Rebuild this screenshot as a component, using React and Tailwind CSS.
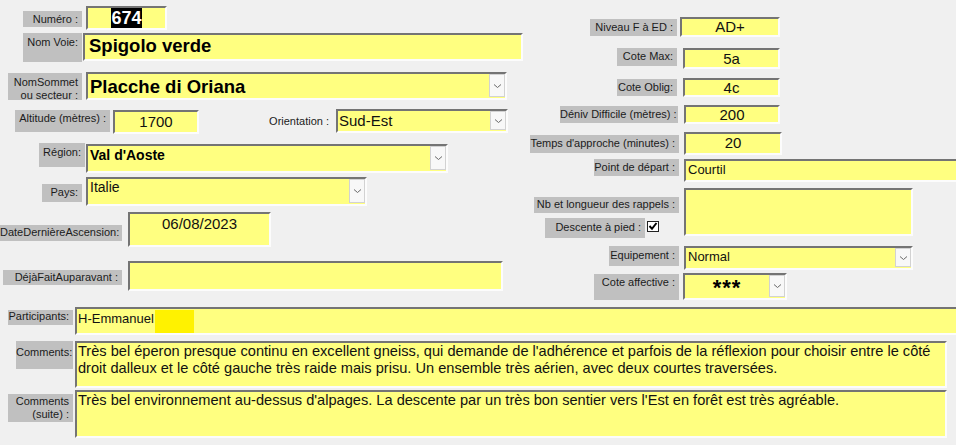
import React from "react";

function Label({ className = "", children }) {
  return (
    <div
      className={`shrink-0 bg-[#c0c0c0] text-right text-[11px] leading-[13px] pr-[4px] text-[#1b1b1b] whitespace-nowrap ${className}`}
    >
      {children}
    </div>
  );
}

function Field({ className = "", children }) {
  return (
    <div
      className={`shrink-0 bg-[#ffff80] border-2 border-t-[#747474] border-l-[#747474] border-b-[#fcfcfc] border-r-[#fcfcfc] overflow-hidden text-[#111] ${className}`}
    >
      {children}
    </div>
  );
}

function Chevron() {
  return (
    <svg width="9" height="6" viewBox="0 0 9 6">
      <path d="M1 1.5 L4.5 4.5 L8 1.5" fill="none" stroke="#6a6a6a" strokeWidth="1" />
    </svg>
  );
}

function Combo({ className = "", textClass = "", children }) {
  return (
    <Field className={`flex ${className}`}>
      <div className={`flex-1 min-w-0 whitespace-nowrap ${textClass}`}>{children}</div>
      <div className="w-[16px] shrink-0 mb-[1px] bg-[#f8f8f8] border border-[#d2d2d2] flex items-center justify-center">
        <Chevron />
      </div>
    </Field>
  );
}

export default function App() {
  return (
    <div className="w-[956px] h-[445px] overflow-hidden bg-[#f0f0f0] font-['Liberation_Sans',Arial,sans-serif]">
      {/* haut du formulaire */}
      <div className="flex items-start">
        <div className="w-[530px] shrink-0 flex flex-col">
          <div className="flex items-start mt-[6px]">
            <Label className="ml-[23px] w-[59px] h-[16px] mt-[5px] pt-[2px]">Numéro :</Label>
            <Field className="ml-[4px] w-[81px] h-[24px] flex justify-center items-start">
              <span className="bg-black text-white font-bold text-[18px] leading-[20px]">674</span>
            </Field>
          </div>

          <div className="flex items-start mt-[3px]">
            <Label className="ml-[23px] w-[59px] h-[29px] pt-[3px]">Nom Voie:</Label>
            <Field className="ml-[1px] w-[440px] h-[28px] pl-[4px] text-[18.5px] font-bold leading-[22px] text-black">
              Spigolo verde
            </Field>
          </div>

          <div className="flex items-start mt-[10px]">
            <Label className="ml-[8px] w-[74px] h-[27px] mt-[1px] pt-[3px] leading-[12px]">
              NomSommet
              <br />
              ou secteur :
            </Label>
            <Combo
              className="ml-[4px] w-[421px] h-[28px]"
              textClass="pl-[2px] pt-[2px] text-[18.5px] font-bold leading-[22px] text-black"
            >
              Placche di Oriana
            </Combo>
          </div>

          <div className="flex items-start mt-[9px]">
            <Label className="ml-[15px] w-[95px] h-[22px] mt-[1px] pt-[2px]">Altitude (mètres) :</Label>
            <Field className="ml-[3px] w-[86px] h-[24px] mt-[1px] text-center text-[15px] leading-[20px]">
              1700
            </Field>
            <div className="ml-[61px] w-[69px] mt-[6px] text-right text-[11px] leading-[13px] text-[#1b1b1b] whitespace-nowrap">
              Orientation :
            </div>
            <Combo className="ml-[7px] w-[172px] h-[24px]" textClass="pl-[1px] text-[15px] leading-[19px]">
              Sud-Est
            </Combo>
          </div>

          <div className="flex items-start mt-[9px]">
            <Label className="ml-[39px] w-[46px] h-[24px] pt-[3px]">Région:</Label>
            <Combo
              className="ml-[1px] mt-[1px] w-[362px] h-[29px]"
              textClass="pl-[2px] text-[14px] font-bold leading-[18px] text-black"
            >
              Val d'Aoste
            </Combo>
          </div>

          <div className="flex items-start mt-[4px]">
            <Label className="ml-[42px] w-[40px] h-[18px] mt-[7px] pt-[2px]">Pays:</Label>
            <Combo className="ml-[4px] w-[281px] h-[29px]" textClass="pl-[2px] text-[14px] leading-[17px]">
              Italie
            </Combo>
          </div>

          <div className="flex items-start mt-[6px]">
            <Label className="w-[122px] h-[16px] mt-[13px] pt-[1px] pr-[2px] text-[10.5px]">DateDernièreAscension:</Label>
            <Field className="ml-[6px] w-[143px] h-[35px] pt-[1px] text-center text-[15px] leading-[18px]">
              06/08/2023
            </Field>
          </div>

          <div className="flex items-start mt-[14px]">
            <Label className="ml-[3px] w-[119px] h-[15px] mt-[9px] pt-[1px]">DéjàFaitAuparavant :</Label>
            <Field className="ml-[6px] w-[375px] h-[30px]" />
          </div>
        </div>

        <div className="flex-1 flex flex-col">
          <div className="flex items-start mt-[17px]">
            <Label className="ml-[60px] w-[87px] h-[17px] mt-[2px] pt-[2px]">Niveau F à ED :</Label>
            <Field className="ml-[3px] w-[100px] h-[20px] text-center text-[15px] leading-[16px]">AD+</Field>
          </div>

          <div className="flex items-start mt-[11px]">
            <Label className="ml-[87px] w-[60px] h-[18px] pt-[2px]">Cote Max:</Label>
            <Field className="ml-[6px] w-[97px] h-[21px] text-center text-[15px] leading-[17px]">5a</Field>
          </div>

          <div className="flex items-start mt-[9px]">
            <Label className="ml-[87px] w-[60px] h-[17px] mt-[1px] pt-[2px]">Cote Oblig:</Label>
            <Field className="ml-[6px] w-[97px] h-[19px] text-center text-[15px] leading-[16px]">4c</Field>
          </div>

          <div className="flex items-start mt-[8px]">
            <Label className="ml-[30px] w-[118px] h-[17px] mt-[1px] pt-[2px]">Déniv Difficile (mètres) :</Label>
            <Field className="ml-[6px] w-[96px] h-[19px] text-center text-[15px] leading-[16px]">200</Field>
          </div>

          <div className="flex items-start mt-[8px]">
            <Label className="w-[149px] h-[18px] mt-[3px] pt-[2px]">Temps d'approche (minutes) :</Label>
            <Field className="ml-[5px] w-[98px] h-[23px] text-center text-[15px] leading-[18px]">20</Field>
          </div>

          <div className="flex items-start mt-[4px]">
            <Label className="ml-[64px] w-[85px] h-[17px] pt-[2px]">Point de départ :</Label>
            <Field className="ml-[5px] w-[290px] h-[23px] pl-[2px] text-[13px] leading-[17px]">Courtil</Field>
          </div>

          <div className="flex items-start mt-[6px]">
            <div className="w-[149px] shrink-0 flex flex-col">
              <Label className="ml-[4px] w-[145px] h-[16px] mt-[9px] pt-[1px]">Nb et longueur des rappels :</Label>
              <div className="flex items-start mt-[5px]">
                <Label className="ml-[15px] w-[100px] h-[20px] pt-[3px]">Descente à pied :</Label>
                <svg className="ml-[2px] mt-[3px] shrink-0" width="12" height="11" viewBox="0 0 12 11">
                  <rect x="0.5" y="0.5" width="11" height="10" fill="#fff" stroke="#222" />
                  <path d="M2.5 5 L5 7.8 L9.5 2" fill="none" stroke="#000" strokeWidth="2" />
                </svg>
              </div>
            </div>
            <Field className="ml-[5px] w-[229px] h-[48px]" />
          </div>

          <div className="flex items-start mt-[8px]">
            <Label className="ml-[79px] w-[70px] h-[20px] pt-[3px]">Equipement :</Label>
            <Combo className="ml-[5px] w-[229px] h-[24px]" textClass="pl-[2px] text-[13px] leading-[18px]">
              Normal
            </Combo>
          </div>

          <div className="flex items-start mt-[3px]">
            <Label className="ml-[64px] w-[85px] h-[26px] mt-[1px] pt-[2px]">Cote affective :</Label>
            <Combo
              className="ml-[4px] w-[104px] h-[27px]"
              textClass="text-center text-[22px] font-bold leading-[26px] tracking-[1px] text-black"
            >
              ***
            </Combo>
          </div>
        </div>
      </div>

      {/* bas du formulaire */}
      <div className="flex items-start mt-[7px]">
        <Label className="ml-[8px] w-[65px] h-[15px] mt-[3px]">Participants:</Label>
        <Field className="ml-[2px] w-[890px] h-[28px] pl-[1px] flex items-start">
          <span className="mt-[2px] text-[13px] leading-[16px] whitespace-nowrap">H-Emmanuel</span>
          <span className="ml-[1px] mt-[1px] w-[39px] h-[25px] bg-[#fff200]" />
        </Field>
      </div>

      <div className="flex items-start mt-[6px]">
        <Label className="ml-[16px] w-[57px] h-[28px] pt-[5px]">Comments:</Label>
        <Field className="ml-[2px] w-[872px] h-[47px] pl-[1px] text-[14.6px] leading-[17px] whitespace-nowrap">
          Très bel éperon presque continu en excellent gneiss, qui demande de l'adhérence et parfois de la réflexion pour choisir entre le côté
          <br />
          droit dalleux et le côté gauche très raide mais prisu. Un ensemble très aérien, avec deux courtes traversées.
        </Field>
      </div>

      <div className="flex items-start mt-[2px]">
        <Label className="ml-[8px] w-[65px] h-[28px] mt-[4px] pt-[1px]">
          Comments
          <br />
          (suite) :
        </Label>
        <Field className="ml-[2px] w-[872px] h-[48px] pl-[1px] text-[14.6px] leading-[17px]">
          Très bel environnement au-dessus d'alpages. La descente par un très bon sentier vers l'Est en forêt est très agréable.
        </Field>
      </div>
    </div>
  );
}
